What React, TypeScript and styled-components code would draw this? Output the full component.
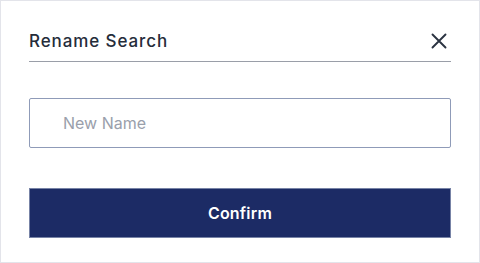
import styled, { createGlobalStyle } from "styled-components";

const GlobalStyle = createGlobalStyle`
    html, body {
        margin: 0;
        padding: 0;
        background: #ffffff;
    }
    * {
        box-sizing: border-box;
    }
`;

const CloseIcon = () => (
    <svg width="16" height="16" viewBox="0 0 16 16" fill="none">
        <path d="M1.5 1.5 L14.5 14.5 M14.5 1.5 L1.5 14.5" stroke="#2b3341" strokeWidth="1.9" strokeLinecap="round"/>
    </svg>
);

const App = () => {
    return (
        <>
            <GlobalStyle/>
            <Dialog>
                <Header>
                    <Title>Rename Search</Title>
                    <CloseButton aria-label="Close">
                        <CloseIcon/>
                    </CloseButton>
                </Header>
                <NameInput placeholder="New Name"/>
                <ConfirmButton>Confirm</ConfirmButton>
            </Dialog>
        </>
    )
};

export default App;

const Dialog = styled.div`
    width: 480px;
    height: 263px;
    border: 1px solid #e3e4ea;
    padding: 28px 28px 0;
    display: flex;
    flex-direction: column;
    font-family: Inter, "Noto Sans", sans-serif;
    background: #ffffff;
`;

const Header = styled.div`
    display: flex;
    align-items: center;
    justify-content: space-between;
    height: 33px;
    padding-bottom: 8px;
    border-bottom: 1px solid #9a9ea8;
`;

const Title = styled.h2`
    margin: 0;
    font-size: 17px;
    line-height: 24px;
    font-weight: 500;
    color: #252c3a;
    letter-spacing: 0.9px;
`;

const CloseButton = styled.button`
    display: flex;
    align-items: center;
    justify-content: center;
    width: 16px;
    height: 16px;
    padding: 0;
    margin-right: 4px;
    border: none;
    background: transparent;
    cursor: pointer;
`;

const NameInput = styled.input`
    margin-top: 36px;
    height: 50px;
    width: 100%;
    padding: 0 0 0 33px;
    border: 1px solid #8f9bb8;
    border-radius: 2px;
    font-family: Inter, "Noto Sans", sans-serif;
    font-size: 16px;
    color: #252c3a;
    outline: none;

    &::placeholder {
        color: #9aa0ab;
    }
`;

const ConfirmButton = styled.button`
    margin-top: 40px;
    height: 50px;
    width: 100%;
    border: 1px solid #7783a6;
    background-color: #1c2b65;
    color: #ffffff;
    font-family: Inter, "Noto Sans", sans-serif;
    font-size: 16px;
    font-weight: 600;
    letter-spacing: 0.2px;
    cursor: pointer;
`;
